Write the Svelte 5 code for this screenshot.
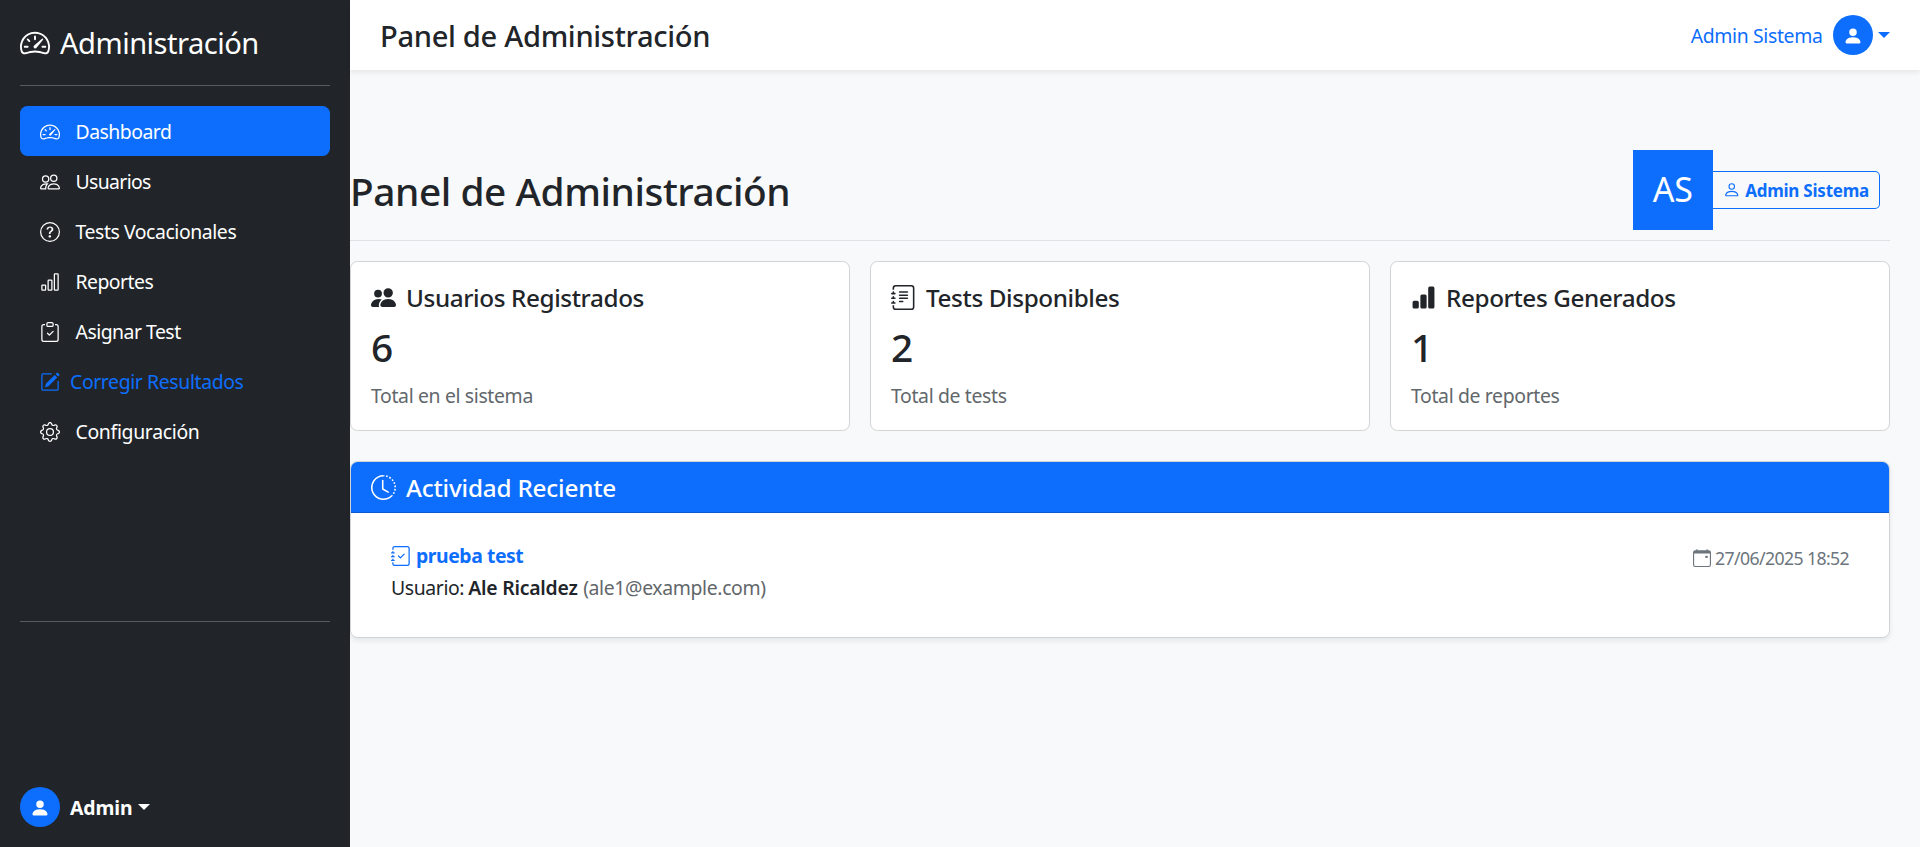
<script>
  const icons = {
    speedometer: [
      'M8 4a.5.5 0 0 1 .5.5V6a.5.5 0 0 1-1 0V4.5A.5.5 0 0 1 8 4M3.732 5.732a.5.5 0 0 1 .707 0l.915.914a.5.5 0 1 1-.708.708l-.914-.915a.5.5 0 0 1 0-.707M2 10a.5.5 0 0 1 .5-.5h1.586a.5.5 0 0 1 0 1H2.5A.5.5 0 0 1 2 10m9.5 0a.5.5 0 0 1 .5-.5h1.5a.5.5 0 0 1 0 1H12a.5.5 0 0 1-.5-.5m.754-4.246a.39.39 0 0 0-.527-.02L7.547 9.31a.91.91 0 1 0 1.302 1.258l3.434-4.297a.39.39 0 0 0-.029-.518z',
      'M0 10a8 8 0 1 1 15.547 2.661c-.442 1.253-1.845 1.602-2.932 1.25C11.309 13.488 9.475 13 8 13c-1.474 0-3.31.488-4.615.911-1.087.352-2.49.003-2.932-1.25A8 8 0 0 1 0 10m8-7a7 7 0 0 0-6.603 9.329c.203.575.923.876 1.68.63C4.397 12.533 6.358 12 8 12s3.604.532 4.923.96c.757.245 1.477-.056 1.68-.631A7 7 0 0 0 8 3'
    ],
    people: [
      'M15 14s1 0 1-1-1-4-5-4-5 3-5 4 1 1 1 1zm-7.978-1L7 12.996c.001-.264.167-1.03.76-1.72C8.312 10.629 9.282 10 11 10c1.717 0 2.687.63 3.24 1.276.593.69.758 1.457.76 1.72l-.008.002-.014.002zM11 7a2 2 0 1 0 0-4 2 2 0 0 0 0 4m3-2a3 3 0 1 1-6 0 3 3 0 0 1 6 0M6.936 9.28a6 6 0 0 0-1.23-.247A7 7 0 0 0 5 9c-4 0-5 3-5 4q0 1 1 1h4.216A2.24 2.24 0 0 1 5 13c0-1.01.377-2.042 1.09-2.904.243-.294.526-.569.846-.816M4.92 10A5.5 5.5 0 0 0 4 13H1c0-.26.164-1.03.76-1.724.545-.636 1.492-1.256 3.16-1.275ZM1.5 5.5a3 3 0 1 1 6 0 3 3 0 0 1-6 0m3-2a2 2 0 1 0 0 4 2 2 0 0 0 0-4'
    ],
    peopleFill: [
      'M7 14s-1 0-1-1 1-4 5-4 5 3 5 4-1 1-1 1zm4-6a3 3 0 1 0 0-6 3 3 0 0 0 0 6m-5.784 6A2.24 2.24 0 0 1 5 13c0-1.355.68-2.75 1.936-3.72A6.3 6.3 0 0 0 5 9c-4 0-5 3-5 4s1 1 1 1zM4.5 8a2.5 2.5 0 1 0 0-5 2.5 2.5 0 0 0 0 5'
    ],
    question: [
      'M8 15A7 7 0 1 1 8 1a7 7 0 0 1 0 14m0 1A8 8 0 1 0 8 0a8 8 0 0 0 0 16',
      'M5.255 5.786a.237.237 0 0 0 .241.247h.825c.138 0 .248-.113.266-.25.09-.656.54-1.134 1.342-1.134.686 0 1.314.343 1.314 1.168 0 .635-.374.927-.965 1.371-.673.489-1.206 1.06-1.168 1.987l.003.217a.25.25 0 0 0 .25.246h.811a.25.25 0 0 0 .25-.25v-.105c0-.718.273-.927 1.01-1.486.609-.463 1.244-.977 1.244-2.056 0-1.511-1.276-2.241-2.673-2.241-1.267 0-2.655.59-2.75 2.286m1.557 5.763c0 .533.425.927 1.01.927.609 0 1.028-.394 1.028-.927 0-.552-.42-.94-1.029-.94-.584 0-1.009.388-1.009.94'
    ],
    chart: [
      'M4 11H2v3h2zm5-4H7v7h2zm5-5v12h-2V2zm-2-1a1 1 0 0 0-1 1v12a1 1 0 0 0 1 1h2a1 1 0 0 0 1-1V2a1 1 0 0 0-1-1zM6 7a1 1 0 0 1 1-1h2a1 1 0 0 1 1 1v7a1 1 0 0 1-1 1H7a1 1 0 0 1-1-1zm-5 4a1 1 0 0 1 1-1h2a1 1 0 0 1 1 1v3a1 1 0 0 1-1 1H2a1 1 0 0 1-1-1z'
    ],
    chartFill: [
      'M1 11a1 1 0 0 1 1-1h2a1 1 0 0 1 1 1v3a1 1 0 0 1-1 1H2a1 1 0 0 1-1-1zm5-4a1 1 0 0 1 1-1h2a1 1 0 0 1 1 1v7a1 1 0 0 1-1 1H7a1 1 0 0 1-1-1zm5-5a1 1 0 0 1 1-1h2a1 1 0 0 1 1 1v12a1 1 0 0 1-1 1h-2a1 1 0 0 1-1-1z'
    ],
    clipboard: [
      'M10.854 7.146a.5.5 0 0 1 0 .708l-3 3a.5.5 0 0 1-.708 0l-1.5-1.5a.5.5 0 1 1 .708-.708L7.5 9.793l2.646-2.647a.5.5 0 0 1 .708 0',
      'M4 1.5H3a2 2 0 0 0-2 2V14a2 2 0 0 0 2 2h10a2 2 0 0 0 2-2V3.5a2 2 0 0 0-2-2h-1v1h1a1 1 0 0 1 1 1V14a1 1 0 0 1-1 1H3a1 1 0 0 1-1-1V3.5a1 1 0 0 1 1-1h1z',
      'M9.5 1a.5.5 0 0 1 .5.5v1a.5.5 0 0 1-.5.5h-3a.5.5 0 0 1-.5-.5v-1a.5.5 0 0 1 .5-.5zm-3-1A1.5 1.5 0 0 0 5 1.5v1A1.5 1.5 0 0 0 6.5 4h3A1.5 1.5 0 0 0 11 2.5v-1A1.5 1.5 0 0 0 9.5 0z'
    ],
    pencil: [
      'M15.502 1.94a.5.5 0 0 1 0 .706L14.459 3.69l-2-2L13.502.646a.5.5 0 0 1 .707 0l1.293 1.293zm-1.75 2.456-2-2L4.939 9.21a.5.5 0 0 0-.121.196l-.805 2.414a.25.25 0 0 0 .316.316l2.414-.805a.5.5 0 0 0 .196-.12l6.813-6.814z',
      'M1 13.5A1.5 1.5 0 0 0 2.5 15h11a1.5 1.5 0 0 0 1.5-1.5v-6a.5.5 0 0 0-1 0v6a.5.5 0 0 1-.5.5h-11a.5.5 0 0 1-.5-.5v-11a.5.5 0 0 1 .5-.5H9a.5.5 0 0 0 0-1H2.5A1.5 1.5 0 0 0 1 2.5z'
    ],
    gear: [
      'M8 4.754a3.246 3.246 0 1 0 0 6.492 3.246 3.246 0 0 0 0-6.492M5.754 8a2.246 2.246 0 1 1 4.492 0 2.246 2.246 0 0 1-4.492 0',
      'M9.796 1.343c-.527-1.79-3.065-1.79-3.592 0l-.094.319a.873.873 0 0 1-1.255.52l-.292-.16c-1.64-.892-3.433.902-2.54 2.541l.159.292a.873.873 0 0 1-.52 1.255l-.319.094c-1.79.527-1.79 3.065 0 3.592l.319.094a.873.873 0 0 1 .52 1.255l-.16.292c-.892 1.64.901 3.434 2.541 2.54l.292-.159a.873.873 0 0 1 1.255.52l.094.319c.527 1.79 3.065 1.79 3.592 0l.094-.319a.873.873 0 0 1 1.255-.52l.292.16c1.64.893 3.434-.902 2.54-2.541l-.159-.292a.873.873 0 0 1 .52-1.255l.319-.094c1.79-.527 1.79-3.065 0-3.592l-.319-.094a.873.873 0 0 1-.52-1.255l.16-.292c.893-1.64-.902-3.433-2.541-2.54l-.292.159a.873.873 0 0 1-1.255-.52zm-2.633.283c.246-.835 1.428-.835 1.674 0l.094.319a1.873 1.873 0 0 0 2.693 1.115l.291-.16c.764-.415 1.6.42 1.184 1.185l-.159.292a1.873 1.873 0 0 0 1.116 2.692l.318.094c.835.246.835 1.428 0 1.674l-.319.094a1.873 1.873 0 0 0-1.115 2.693l.16.291c.415.764-.42 1.6-1.185 1.184l-.291-.159a1.873 1.873 0 0 0-2.693 1.116l-.094.318c-.246.835-1.428.835-1.674 0l-.094-.319a1.873 1.873 0 0 0-2.692-1.115l-.292.16c-.764.415-1.6-.42-1.184-1.185l.159-.291A1.873 1.873 0 0 0 1.945 8.93l-.319-.094c-.835-.246-.835-1.428 0-1.674l.319-.094A1.873 1.873 0 0 0 3.06 4.377l-.16-.292c-.415-.764.42-1.6 1.185-1.184l.292.159a1.873 1.873 0 0 0 2.692-1.115z'
    ],
    personFill: ['M3 14s-1 0-1-1 1-4 6-4 6 3 6 4-1 1-1 1zm5-6a3 3 0 1 0 0-6 3 3 0 0 0 0 6'],
    person: [
      'M8 8a3 3 0 1 0 0-6 3 3 0 0 0 0 6m2-3a2 2 0 1 1-4 0 2 2 0 0 1 4 0m4 8c0 1-1 1-1 1H3s-1 0-1-1 1-4 6-4 6 3 6 4m-1-.004c-.001-.246-.154-.986-.832-1.664C11.516 10.68 10.289 10 8 10s-3.516.68-4.168 1.332c-.678.678-.83 1.418-.832 1.664z'
    ],
    journalText: [
      'M5 10.5a.5.5 0 0 1 .5-.5h2a.5.5 0 0 1 0 1h-2a.5.5 0 0 1-.5-.5m0-2a.5.5 0 0 1 .5-.5h5a.5.5 0 0 1 0 1h-5a.5.5 0 0 1-.5-.5m0-2a.5.5 0 0 1 .5-.5h5a.5.5 0 0 1 0 1h-5a.5.5 0 0 1-.5-.5m0-2a.5.5 0 0 1 .5-.5h5a.5.5 0 0 1 0 1h-5a.5.5 0 0 1-.5-.5',
      'M3 0h10a2 2 0 0 1 2 2v12a2 2 0 0 1-2 2H3a2 2 0 0 1-2-2v-1h1v1a1 1 0 0 0 1 1h10a1 1 0 0 0 1-1V2a1 1 0 0 0-1-1H3a1 1 0 0 0-1 1v1H1V2a2 2 0 0 1 2-2',
      'M1 5v-.5a.5.5 0 0 1 1 0V5h.5a.5.5 0 0 1 0 1h-2a.5.5 0 0 1 0-1zm0 3v-.5a.5.5 0 0 1 1 0V8h.5a.5.5 0 0 1 0 1h-2a.5.5 0 0 1 0-1zm0 3v-.5a.5.5 0 0 1 1 0v.5h.5a.5.5 0 0 1 0 1h-2a.5.5 0 0 1 0-1z'
    ],
    journalCheck: [
      'M10.854 6.146a.5.5 0 0 1 0 .708l-3 3a.5.5 0 0 1-.708 0l-1.5-1.5a.5.5 0 1 1 .708-.708L7.5 8.793l2.646-2.647a.5.5 0 0 1 .708 0',
      'M3 0h10a2 2 0 0 1 2 2v12a2 2 0 0 1-2 2H3a2 2 0 0 1-2-2v-1h1v1a1 1 0 0 0 1 1h10a1 1 0 0 0 1-1V2a1 1 0 0 0-1-1H3a1 1 0 0 0-1 1v1H1V2a2 2 0 0 1 2-2',
      'M1 5v-.5a.5.5 0 0 1 1 0V5h.5a.5.5 0 0 1 0 1h-2a.5.5 0 0 1 0-1zm0 3v-.5a.5.5 0 0 1 1 0V8h.5a.5.5 0 0 1 0 1h-2a.5.5 0 0 1 0-1zm0 3v-.5a.5.5 0 0 1 1 0v.5h.5a.5.5 0 0 1 0 1h-2a.5.5 0 0 1 0-1z'
    ],
    clock: [
      'M8.515 1.019A7 7 0 0 0 8 1V0a8 8 0 0 1 .589.022zm2.004.45a7 7 0 0 0-.985-.299l.219-.976q.576.129 1.126.342zm1.37.71a7 7 0 0 0-.439-.27l.493-.87a8 8 0 0 1 .979.654l-.615.789a7 7 0 0 0-.418-.302zm1.834 1.79a7 7 0 0 0-.653-.796l.724-.69q.406.429.747.91zm.744 1.352a7 7 0 0 0-.214-.468l.893-.45a8 8 0 0 1 .45 1.088l-.95.313a7 7 0 0 0-.179-.483m.53 2.507a7 7 0 0 0-.1-1.025l.985-.17q.1.58.116 1.17zm-.131 1.538q.05-.254.081-.51l.993.123a8 8 0 0 1-.23 1.155l-.964-.267q.069-.247.12-.501m-.952 2.379q.276-.436.486-.908l.914.405q-.24.54-.555 1.038zm-.964 1.205q.183-.183.35-.378l.758.653a8 8 0 0 1-.401.432z',
      'M8 1a7 7 0 1 0 4.95 11.95l.707.707A8.001 8.001 0 1 1 8 0z',
      'M7.5 3a.5.5 0 0 1 .5.5v5.21l3.248 1.856a.5.5 0 0 1-.496.868l-3.5-2A.5.5 0 0 1 7 9V3.5a.5.5 0 0 1 .5-.5'
    ],
    calendar: [
      'M11 6.5a.5.5 0 0 1 .5-.5h1a.5.5 0 0 1 .5.5v1a.5.5 0 0 1-.5.5h-1a.5.5 0 0 1-.5-.5z',
      'M3.5 0a.5.5 0 0 1 .5.5V1h8V.5a.5.5 0 0 1 1 0V1h1a2 2 0 0 1 2 2v11a2 2 0 0 1-2 2H2a2 2 0 0 1-2-2V3a2 2 0 0 1 2-2h1V.5a.5.5 0 0 1 .5-.5M1 4v10a1 1 0 0 0 1 1h12a1 1 0 0 0 1-1V4z'
    ]
  };

  const nav = [
    { id: 'dashboard', icon: 'speedometer', label: 'Dashboard', state: 'active' },
    { id: 'usuarios', icon: 'people', label: 'Usuarios' },
    { id: 'tests', icon: 'question', label: 'Tests Vocacionales' },
    { id: 'reportes', icon: 'chart', label: 'Reportes' },
    { id: 'asignar', icon: 'clipboard', label: 'Asignar Test' },
    { id: 'corregir', icon: 'pencil', label: 'Corregir Resultados', state: 'accent' },
    { id: 'config', icon: 'gear', label: 'Configuración' }
  ];

  const stats = [
    { icon: 'peopleFill', title: 'Usuarios Registrados', value: 6, note: 'Total en el sistema' },
    { icon: 'journalText', title: 'Tests Disponibles', value: 2, note: 'Total de tests' },
    { icon: 'chartFill', title: 'Reportes Generados', value: 1, note: 'Total de reportes' }
  ];
</script>

{#snippet icon(name, size)}
  <svg class="icon" width={size} height={size} viewBox="0 0 16 16" fill="currentColor" aria-hidden="true">
    {#each icons[name] as d}
      <path fill-rule={name === 'speedometer' ? 'evenodd' : 'nonzero'} {d} />
    {/each}
  </svg>
{/snippet}

<div class="layout">
  <aside class="sidebar">
    <div class="brand">{@render icon('speedometer', 30)}<span>Administración</span></div>
    <hr />
    <nav>
      {#each nav as item}
        <a class="link {item.id} {item.state ?? ''}" href="#{item.id}">
          {@render icon(item.icon, 20)}<span>{item.label}</span>
        </a>
      {/each}
    </nav>
    <hr class="lower" />
    <div class="account">
      <span class="avatar">{@render icon('personFill', 20)}</span>
      <strong>Admin</strong>
      <i class="caret"></i>
    </div>
  </aside>

  <div class="content">
    <header class="topbar">
      <h4>Panel de Administración</h4>
      <div class="user">
        <span class="name">Admin Sistema</span>
        <span class="avatar">{@render icon('personFill', 20)}</span>
        <i class="caret"></i>
      </div>
    </header>

    <main>
      <div class="heading">
        <h1>Panel de Administración</h1>
        <div class="profile">
          <div class="initials">AS</div>
          <button>{@render icon('person', 17.5)}<span>Admin Sistema</span></button>
        </div>
      </div>

      <section class="stats">
        {#each stats as stat}
          <article class="card">
            <h5>{@render icon(stat.icon, 25)}<span>{stat.title}</span></h5>
            <div class="value">{stat.value}</div>
            <p>{stat.note}</p>
          </article>
        {/each}
      </section>

      <section class="activity">
        <div class="activity-head">{@render icon('clock', 25)}<span>Actividad Reciente</span></div>
        <div class="entry">
          <div class="detail">
            <div class="test">{@render icon('journalCheck', 20)}<strong>prueba test</strong></div>
            <div class="who"><span>Usuario:</span><strong>Ale Ricaldez</strong><span class="mail">(ale1@example.com)</span></div>
          </div>
          <div class="date">{@render icon('calendar', 18)}<span>27/06/2025 18:52</span></div>
        </div>
      </section>
    </main>
  </div>
</div>

<style>
  :global(body) {
    background: #f8f9fa;
  }
  * {
    box-sizing: border-box;
  }
  .layout {
    display: flex;
    height: 847px;
    overflow: hidden;
    font-family: 'Noto Sans', 'Open Sans', sans-serif;
    font-size: 19.4px;
    line-height: 30px;
    letter-spacing: -0.02em;
    color: #212529;
    white-space: nowrap;
  }
  .icon {
    display: block;
    flex: none;
  }
  h1, h4, h5, p {
    margin: 0;
    font-weight: 500;
  }

  .sidebar {
    display: flex;
    flex-direction: column;
    flex: none;
    width: 350px;
    padding: 20px;
    background: #212529;
    color: #fff;
  }
  .brand {
    display: flex;
    align-items: center;
    gap: 10px;
    height: 45px;
    font-size: 29.1px;
    letter-spacing: -0.0176em;
  }
  hr {
    width: 100%;
    height: 1px;
    margin: 20px 0;
    border: 0;
    background: #585c5f;
  }
  hr.lower {
    margin: 0;
  }
  nav {
    display: flex;
    flex-direction: column;
    height: 515px;
  }
  .link {
    display: flex;
    align-items: center;
    gap: 15.5px;
    height: 50px;
    padding: 2px 20px 0;
    border-radius: 7.5px;
    color: #fff;
    text-decoration: none;
  }
  .link.active {
    background: #0d6efd;
  }
  .link.accent {
    gap: 10px;
    color: #0d6efd;
  }
  .dashboard, .asignar { letter-spacing: -0.0258em; }
  .tests { letter-spacing: -0.0215em; }
  .usuarios { letter-spacing: -0.033em; }
  .reportes { letter-spacing: -0.027em; }
  .corregir { letter-spacing: -0.0195em; }
  .config { letter-spacing: -0.0163em; }
  .account {
    display: flex;
    align-items: center;
    gap: 10px;
    height: 40px;
    margin-top: auto;
    letter-spacing: -0.005em;
  }
  .account strong {
    padding-top: 2px;
  }
  .account .caret {
    margin-left: -5px;
  }
  .avatar {
    display: flex;
    align-items: center;
    justify-content: center;
    width: 40px;
    height: 40px;
    padding-top: 2px;
    border-radius: 50%;
    background: #0d6efd;
    color: #fff;
  }
  .caret {
    border-top: 6px solid;
    border-right: 6px solid transparent;
    border-left: 6px solid transparent;
  }

  .content {
    flex: 1;
  }
  .topbar {
    display: flex;
    align-items: center;
    justify-content: space-between;
    height: 70px;
    padding: 0 30px;
    background: #fff;
    box-shadow: 0 2.5px 5px rgba(0, 0, 0, 0.075);
  }
  h4 {
    padding-top: 2px;
    font-size: 29.1px;
    letter-spacing: -0.011em;
  }
  .user {
    display: flex;
    align-items: center;
    color: #0d6efd;
    letter-spacing: -0.0179em;
  }
  .user .name {
    padding-top: 2px;
  }
  .user .avatar {
    margin: 0 5px 0 10.5px;
  }

  main {
    padding: 80px 30px 0 0;
  }
  .heading {
    display: flex;
    align-items: center;
    justify-content: space-between;
    height: 91px;
    padding-bottom: 10px;
    border-bottom: 1px solid #dee2e6;
  }
  h1 {
    padding-top: 2px;
    font-size: 38.8px;
    line-height: 48px;
    letter-spacing: -0.011em;
  }
  .profile {
    display: flex;
    align-items: center;
    padding-right: 10px;
  }
  .initials {
    width: 80px;
    height: 80px;
    background: #0d6efd;
    color: #fff;
    font-size: 34px;
    line-height: 78px;
    letter-spacing: -0.0114em;
    text-align: center;
  }
  button {
    display: flex;
    align-items: center;
    gap: 5px;
    height: 38px;
    padding: 0 10px;
    border: 1px solid #0d6efd;
    border-left: 0;
    border-radius: 0 5px 5px 0;
    background: transparent;
    color: #0d6efd;
    font: 700 17px 'Noto Sans', 'Open Sans', sans-serif;
    letter-spacing: -0.0138em;
  }
  button span {
    padding-top: 1px;
  }

  .stats {
    display: grid;
    grid-template-columns: repeat(3, 1fr);
    gap: 20px;
    margin-top: 20px;
  }
  .card {
    height: 170px;
    padding: 18px 20px;
    border: 1px solid #d2d3d4;
    border-radius: 7.5px;
    background: #fff;
  }
  h5 {
    display: flex;
    align-items: center;
    gap: 10px;
    height: 35px;
    font-size: 24.25px;
    letter-spacing: -0.0158em;
  }
  .value {
    margin-top: 8px;
    font-size: 38.8px;
    font-weight: 500;
    line-height: 48px;
  }
  .card p {
    margin-top: 10px;
    font-weight: 400;
    color: #62676b;
    letter-spacing: -0.018em;
  }

  .activity {
    height: 177px;
    margin-top: 30px;
    border: 1px solid #d2d3d4;
    border-radius: 7.5px;
    background: #fff;
    box-shadow: 0 2.5px 5px rgba(0, 0, 0, 0.075);
    overflow: hidden;
  }
  .activity-head {
    display: flex;
    align-items: center;
    gap: 10px;
    height: 51px;
    padding: 0 20px;
    border-bottom: 1px solid #0b5bd0;
    background: #0d6efd;
    color: #fff;
    font-size: 24.25px;
    font-weight: 500;
    letter-spacing: -0.0073em;
  }
  .activity-head span {
    padding-top: 2px;
  }
  .entry {
    display: flex;
    align-items: flex-start;
    justify-content: space-between;
    padding: 28px 40px;
  }
  .test {
    display: flex;
    align-items: center;
    gap: 5px;
    color: #0d6efd;
    letter-spacing: -0.0229em;
  }
  .who {
    display: flex;
    gap: 5px;
    margin-top: 2px;
  }
  .who strong {
    margin-left: -1px;
    font-weight: 600;
    letter-spacing: -0.0113em;
  }
  .mail {
    margin-left: 0.5px;
    color: #62676b;
    letter-spacing: -0.0185em;
  }
  .date {
    display: flex;
    align-items: center;
    gap: 4.5px;
    margin-top: 2px;
    color: #6c757d;
    font-size: 17.7px;
    letter-spacing: -0.035em;
  }
</style>
